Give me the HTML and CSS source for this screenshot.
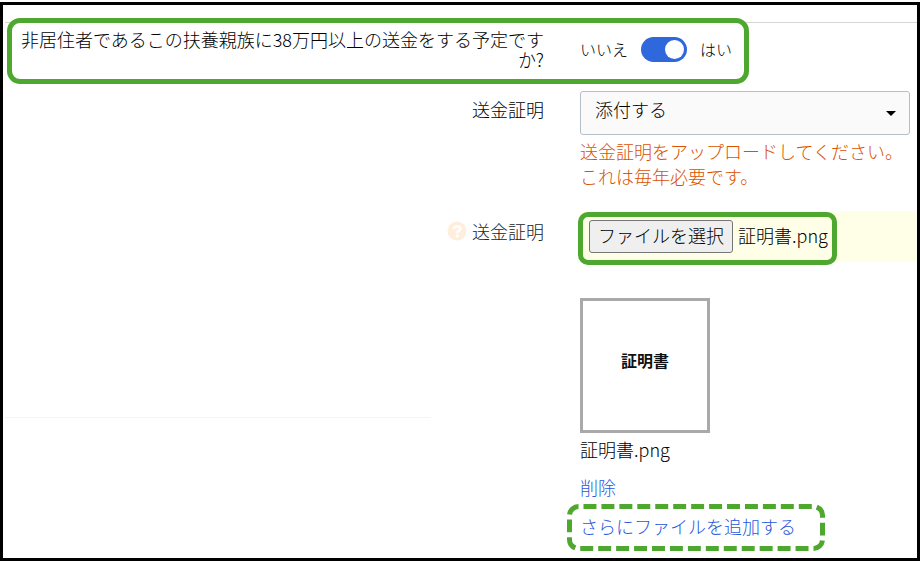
FILE: index.html
```
<!DOCTYPE html>
<html lang="ja">
<head>
    <meta charset="UTF-8">
    <meta name="viewport" content="width=device-width, initial-scale=1.0">
    <title>送金証明</title>
    <link rel="stylesheet" href="styles.css">
</head>
<body>
    <form class="page">
        <div class="row row-question">
            <label class="row-label" for="remittance">非居住者であるこの扶養親族に38万円以上の送金をする予定ですか?</label>
            <div class="toggle">
                <span>いいえ</span>
                <input type="checkbox" role="switch" id="remittance" class="toggle-input" checked>
                <span>はい</span>
            </div>
        </div>

        <div class="row row-select">
            <label class="row-label" for="proof-type">送金証明</label>
            <div>
                <div class="select-wrap">
                    <select id="proof-type" class="select">
                        <option>添付する</option>
                    </select>
                </div>
                <p class="error">送金証明をアップロードしてください。これは毎年必要です。</p>
            </div>
        </div>

        <div class="row row-upload">
            <div class="row-label upload-label">
                <svg class="help-icon" viewBox="0 0 20 20" aria-hidden="true">
                    <circle cx="10" cy="10" r="9.5" fill="#ffeedb"/>
                    <path d="M6.800 8.200C6.800 4.400 13.400 4.400 13.400 7.800c0 2.200-3.100 2.100-3.100 4.400" fill="none" stroke="#fff" stroke-width="2.800"/>
                    <circle cx="10.200" cy="15" r="1.700" fill="#fff"/>
                </svg>
                <label for="proof-file">送金証明</label>
            </div>
            <div class="upload">
                <div class="upload-file">
                    <button type="button" class="file-btn" id="file-btn">ファイルを選択</button>
                    <span class="file-name" id="file-name">証明書.png</span>
                    <input type="file" id="proof-file" hidden>
                </div>
            </div>
        </div>

        <div class="row row-preview">
            <hr class="divider">
            <div>
                <div class="thumbnail">証明書</div>
                <p class="preview-name">証明書.png</p>
                <a href="#" class="link">削除</a>
                <div class="add-file">
                    <a href="#" class="link">さらにファイルを追加する</a>
                    <svg class="dashed-outline" viewBox="0 0 258 47" aria-hidden="true">
                        <rect x="2.5" y="2.5" width="253" height="42" rx="9" pathLength="576" fill="none" stroke="#4ea72e" stroke-width="5" stroke-dasharray="13 5" stroke-dashoffset="-5"/>
                    </svg>
                </div>
            </div>
        </div>
    </form>

    <script>
        const fileInput = document.getElementById('proof-file');
        const fileName = document.getElementById('file-name');

        document.getElementById('file-btn').addEventListener('click', () => fileInput.click());

        fileInput.addEventListener('change', () => {
            if (fileInput.files.length) {
                fileName.textContent = fileInput.files[0].name;
            }
        });
    </script>
</body>
</html>
```
FILE: styles.css
```
*,
*::before,
*::after {
    box-sizing: border-box;
    margin: 0;
    padding: 0;
}

body {
    background-color: #fff;
    color: #000;
    font-family: "Noto Sans CJK JP", "Noto Sans", sans-serif;
    font-size: 18px;
    font-weight: 300;
    line-height: 20px;
}

.page {
    margin-top: 2px;
    min-height: calc(100vh - 2px);
    border: 3px solid #000;
    padding-top: 17px;
}

.row {
    display: grid;
    grid-template-columns: minmax(0, 1fr) 330px;
    column-gap: 36px;
    padding: 0 7px 0 16px;
}

.row-label {
    text-align: right;
}

.row-question {
    position: relative;
    margin-left: 2px;
    border-top: 1px solid #d5d5d5;
    padding-top: 6px;
    padding-left: 14px;
}

.row-question::after {
    content: "";
    position: absolute;
    top: -5px;
    left: 2px;
    right: 168px;
    height: 66px;
    border: 5px solid #4ea72e;
    border-radius: 13px;
    pointer-events: none;
}

.toggle {
    display: flex;
    align-items: center;
    gap: 13px;
    font-size: 16px;
}

.toggle-input {
    appearance: none;
    display: flex;
    width: 46px;
    height: 25px;
    padding: 3px;
    border-radius: 13px;
    background-color: #8c8c8c;
    cursor: pointer;
}

.toggle-input::before {
    content: "";
    width: 19px;
    height: 19px;
    border-radius: 50%;
    background-color: #fff;
}

.toggle-input:checked {
    justify-content: flex-end;
    background-color: #2f67dc;
}

.row-select {
    margin-top: 22px;
}

.row-select .row-label {
    padding-top: 8px;
}

.select-wrap {
    position: relative;
}

.select-wrap::after {
    content: "";
    position: absolute;
    top: 20px;
    right: 14px;
    border: 5px solid transparent;
    border-top-color: #000;
    border-bottom: 0;
    pointer-events: none;
}

.select {
    appearance: none;
    width: 100%;
    height: 44px;
    padding: 0 14px 8px;
    border: 1px solid #b5bfc9;
    border-radius: 3px;
    background-color: #fafafa;
    color: inherit;
    font: inherit;
}

.error {
    margin-top: 4px;
    color: #d95200;
    line-height: 25px;
}

.row-upload {
    margin-top: 22px;
    padding-right: 0;
    grid-template-columns: minmax(0, 1fr) 337px;
}

.upload-label {
    display: flex;
    justify-content: flex-end;
    align-items: center;
    gap: 5px;
    padding-bottom: 11px;
    color: #222;
}

.help-icon {
    width: 20px;
    height: 20px;
}

.upload {
    height: 51px;
    padding: 9px;
    background-color: #ffffe8;
}

.upload-file {
    position: relative;
    display: inline-flex;
    align-items: center;
    gap: 5px;
}

.upload-file::after {
    content: "";
    position: absolute;
    inset: -8px -9px -12px -11px;
    border: 5px solid #4ea72e;
    border-radius: 10px;
    pointer-events: none;
}

.file-btn {
    height: 33px;
    padding: 0 8px 4px;
    border: 1px solid #767676;
    border-radius: 3px;
    background-color: #efefef;
    color: #000;
    font: inherit;
    cursor: pointer;
}

.file-name {
    padding-bottom: 4px;
}

.row-preview {
    margin-top: 36px;
    padding-left: 2px;
}

.divider {
    width: 79%;
    height: 1px;
    margin-top: 119px;
    border: 0;
    background-color: #f5f5f5;
}

.thumbnail {
    display: flex;
    justify-content: center;
    align-items: center;
    width: 130px;
    height: 135px;
    padding-bottom: 12px;
    border: 3px solid #a9a9a9;
    color: #111;
    font-size: 16px;
    font-weight: 700;
}

.preview-name {
    margin: 6px 0 18px;
}

.link {
    color: #1f58dc;
    text-decoration: none;
}

.link:hover {
    text-decoration: underline;
}

.add-file {
    position: relative;
    margin-top: 19px;
}

.dashed-outline {
    position: absolute;
    top: -12px;
    left: -13px;
    width: 258px;
    height: 47px;
    pointer-events: none;
}
```
